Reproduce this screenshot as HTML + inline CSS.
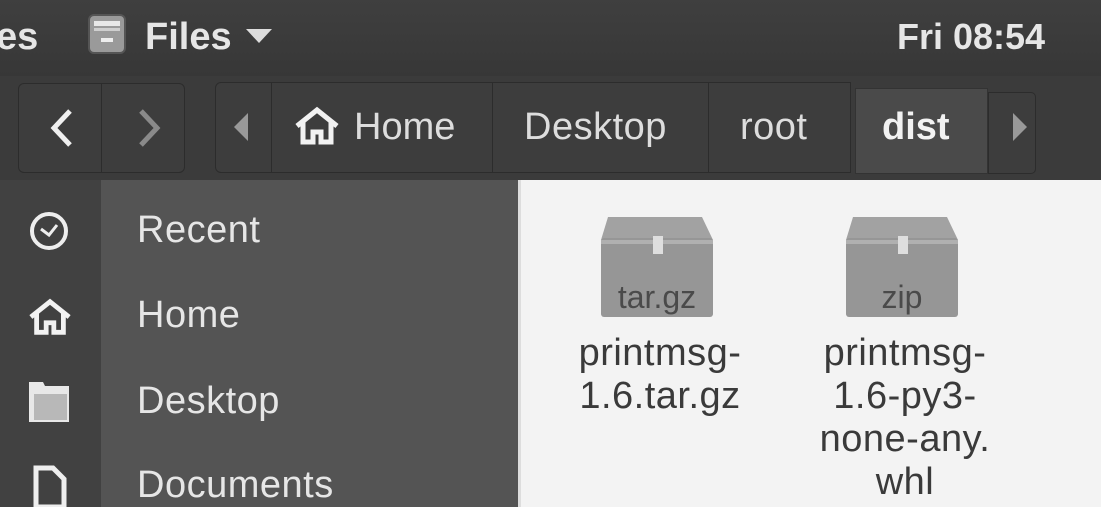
<!DOCTYPE html>
<html><head><style>
*{margin:0;padding:0;box-sizing:border-box}
body{width:1101px;height:507px;overflow:hidden;background:#f2f2f2;font-family:"Liberation Sans","DejaVu Sans",sans-serif;position:relative}
.a{position:absolute}
.top{left:0;top:0;width:1101px;height:76px;background:linear-gradient(#3f3f3f,#373737)}
.tb{left:0;top:76px;width:1101px;height:104px;background:#3b3b3b}
.t{color:#e6e6e6;font-size:38px;white-space:nowrap;line-height:44px}
.btn{border:1px solid #2c2c2c;border-radius:5px;background:#3d3d3d}
.side1{left:0;top:180px;width:101px;height:327px;background:#414141}
.side2{left:101px;top:180px;width:417px;height:327px;background:#545454}
.content{left:518px;top:180px;width:583px;height:327px;background:#f3f3f3;border-left:3px solid #ddd}
.fn{color:#3a3a3a;font-size:38px;text-align:center;line-height:43px;letter-spacing:0.5px}
</style></head><body>
<div class="a top"></div>
<div class="a t" style="left:-4px;top:15px;font-weight:bold">es</div>
<svg class="a" style="left:88px;top:14px" width="38" height="40" viewBox="0 0 38 40">
<rect x="1" y="1" width="36" height="38" rx="5" fill="#9a9a9a" stroke="#555" stroke-width="2"/>
<rect x="6" y="7" width="26" height="5" fill="#e8e8e8"/><rect x="6" y="14" width="26" height="3" fill="#cfcfcf"/>
<rect x="13" y="24" width="12" height="4" fill="#eee"/></svg>
<div class="a t" style="left:145px;top:15px;font-weight:bold">Files</div>
<svg class="a" style="left:246px;top:29px" width="26" height="14"><polygon points="0,0 26,0 13,14" fill="#ddd"/></svg>
<div class="a t" style="left:897px;top:15px;font-weight:bold;font-size:36px">Fri 08:54</div>

<div class="a tb"></div>
<div class="a btn" style="left:18px;top:83px;width:84px;height:90px;border-radius:6px 0 0 6px"></div>
<div class="a btn" style="left:101px;top:83px;width:84px;height:90px;border-radius:0 6px 6px 0"></div>
<svg class="a" style="left:48px;top:108px" width="28" height="40"><polyline points="22,3 6,20 22,37" fill="none" stroke="#f0f0f0" stroke-width="5"/></svg>
<svg class="a" style="left:135px;top:108px" width="28" height="40"><polyline points="6,3 22,20 6,37" fill="none" stroke="#8a8a8a" stroke-width="5"/></svg>
<div class="a btn" style="left:215px;top:82px;width:57px;height:91px;border-radius:6px 0 0 6px"></div>
<svg class="a" style="left:234px;top:113px" width="14" height="28"><polygon points="14,0 14,28 0,14" fill="#999"/></svg>
<div class="a btn" style="left:271px;top:82px;width:222px;height:91px;border-radius:0"></div>
<svg class="a" style="left:294px;top:106px" width="46" height="40" viewBox="0 0 46 40"><path d="M3 20 L23 4 L43 20 M9 16 V36 H19 V26 H27 V36 H37 V16" fill="none" stroke="#f2f2f2" stroke-width="5" stroke-linejoin="miter"/></svg>
<div class="a t" style="left:354px;top:105px;color:#ddd">Home</div>
<div class="a btn" style="left:492px;top:82px;width:217px;height:91px;border-radius:0"></div>
<div class="a t" style="left:524px;top:105px;color:#ddd;letter-spacing:0.5px">Desktop</div>
<div class="a btn" style="left:708px;top:82px;width:143px;height:91px;border-radius:0"></div>
<div class="a t" style="left:740px;top:105px;color:#ddd;letter-spacing:0.5px">root</div>
<div class="a" style="left:855px;top:88px;width:133px;height:86px;background:#4a4a4a;border:1px solid #333"></div>
<div class="a t" style="left:882px;top:105px;font-weight:bold;color:#f2f2f2">dist</div>
<div class="a btn" style="left:988px;top:92px;width:48px;height:82px;border-radius:0 5px 5px 0"></div>
<svg class="a" style="left:1013px;top:113px" width="14" height="28"><polygon points="0,0 14,14 0,28" fill="#999"/></svg>

<div class="a side1"></div><div class="a side2"></div>
<svg class="a" style="left:28px;top:210px" width="42" height="42"><circle cx="21" cy="21" r="17" fill="none" stroke="#eee" stroke-width="4"/><polyline points="13,19 21,25 29,15" fill="none" stroke="#eee" stroke-width="3"/></svg>
<svg class="a" style="left:28px;top:297px" width="44" height="40" viewBox="0 0 46 40"><path d="M3 20 L23 4 L43 20 M9 16 V36 H19 V26 H27 V36 H37 V16" fill="none" stroke="#f2f2f2" stroke-width="5"/></svg>
<svg class="a" style="left:27px;top:380px" width="44" height="44"><path d="M2 2 H16 L18 6 H42 V42 H2 Z" fill="#e8e8e8"/><rect x="7" y="14" width="33" height="26" fill="#b8b8b8"/></svg>
<svg class="a" style="left:33px;top:465px" width="34" height="42"><path d="M3 3 H20 L31 14 V42 H3 Z" fill="none" stroke="#eee" stroke-width="5"/></svg>
<div class="a t" style="left:137px;top:208px;letter-spacing:0.5px">Recent</div>
<div class="a t" style="left:137px;top:293px;letter-spacing:0.5px">Home</div>
<div class="a t" style="left:137px;top:379px;letter-spacing:0.5px">Desktop</div>
<div class="a t" style="left:137px;top:463px;letter-spacing:0.5px">Documents</div>

<div class="a content"></div>
<svg class="a" style="left:598px;top:214px" width="120" height="106" viewBox="0 0 120 106">
<polygon points="10,3 104,3 115,26 3,26" fill="#a2a2a2"/>
<rect x="3" y="24" width="112" height="79" rx="3" fill="#969696"/>
<rect x="3" y="26" width="112" height="4" fill="#b0b0b0"/>
<rect x="55" y="22" width="10" height="18" fill="#dedede"/>
<text x="59" y="94" font-family="Liberation Sans,sans-serif" font-size="32" text-anchor="middle" fill="#4a4a4a">tar.gz</text></svg>
<svg class="a" style="left:843px;top:214px" width="120" height="106" viewBox="0 0 120 106">
<polygon points="10,3 104,3 115,26 3,26" fill="#a2a2a2"/>
<rect x="3" y="24" width="112" height="79" rx="3" fill="#969696"/>
<rect x="3" y="26" width="112" height="4" fill="#b0b0b0"/>
<rect x="55" y="22" width="10" height="18" fill="#dedede"/>
<text x="59" y="94" font-family="Liberation Sans,sans-serif" font-size="32" text-anchor="middle" fill="#4a4a4a">zip</text></svg>
<div class="a fn" style="left:560px;top:332px;width:200px">printmsg-<br>1.6.tar.gz</div>
<div class="a fn" style="left:805px;top:332px;width:200px">printmsg-<br>1.6-py3-<br>none-any.<br>whl</div>
</body></html>
